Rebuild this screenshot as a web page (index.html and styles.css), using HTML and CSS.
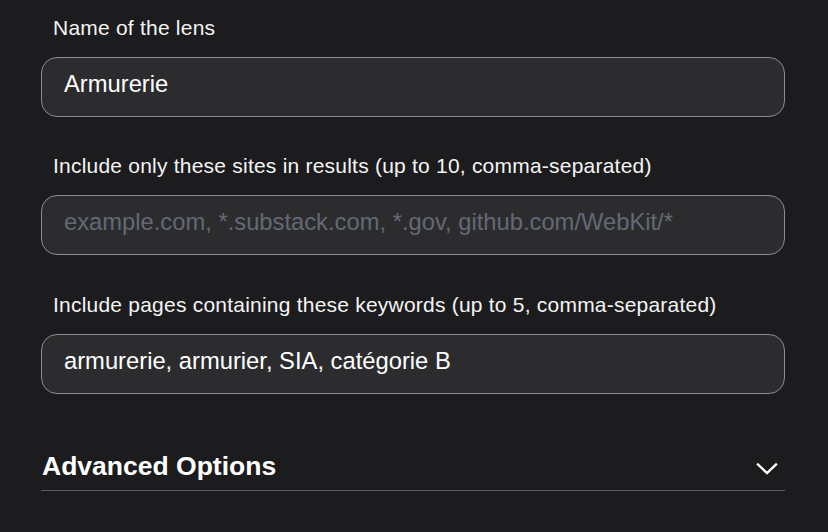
FILE: index.html
```html
<!DOCTYPE html>
<html lang="en">
<head>
<meta charset="utf-8">
<title>Lens</title>
<link rel="stylesheet" href="styles.css">
</head>
<body>
<div class="form">
  <div class="field">
    <label class="label" for="name">Name of the lens</label>
    <input class="input" id="name" type="text" value="Armurerie">
  </div>
  <div class="field">
    <label class="label" for="sites">Include only these sites in results (up to 10, comma-separated)</label>
    <input class="input" id="sites" type="text" placeholder="example.com, *.substack.com, *.gov, github.com/WebKit/*">
  </div>
  <div class="field field-keywords">
    <label class="label" for="kw">Include pages containing these keywords (up to 5, comma-separated)</label>
    <input class="input" id="kw" type="text" value="armurerie, armurier, SIA, catégorie B">
  </div>
  <div class="advanced">
    <h2 class="advanced-title">Advanced Options</h2>
    <svg class="chevron" width="22" height="14" viewBox="0 0 22 14" aria-hidden="true">
      <path d="M2 2.5 L11 11 L20 2.5" fill="none" stroke="#ffffff" stroke-width="2.4" stroke-linecap="square" stroke-linejoin="miter"/>
    </svg>
  </div>
</div>
</body>
</html>
```

FILE: styles.css
```css
html, body {
  margin: 0;
  padding: 0;
  background: #1c1c1e;
  font-family: "Liberation Sans", Arial, sans-serif;
  color: #f2f2f2;
}

.form {
  width: 744px;
  margin-left: 41px;
  padding-top: 15px;
  display: flex;
  flex-direction: column;
  gap: 36px;
}

.field {
  display: flex;
  flex-direction: column;
  gap: 17px;
}

.field-keywords {
  margin-top: 1px;
}

.label {
  font-size: 21px;
  line-height: 25px;
  letter-spacing: 0.22px;
  padding-left: 12px;
  color: #f4f4f4;
}

.input {
  box-sizing: border-box;
  height: 60px;
  width: 100%;
  margin: 0;
  padding: 0 22px 7px 22px;
  background: #2c2c2e;
  border: 1px solid #8c8c90;
  border-radius: 16px;
  color: #ffffff;
  font-family: "Liberation Sans", Arial, sans-serif;
  font-size: 23.75px;
  outline: none;
}

.input::placeholder {
  color: #636975;
  opacity: 1;
}

.advanced {
  margin-top: 20px;
  display: flex;
  align-items: center;
  justify-content: space-between;
  border-bottom: 1px solid #5a5a5e;
  padding-bottom: 8px;
}

.advanced-title {
  margin: 0;
  padding-left: 1px;
  font-size: 26.5px;
  line-height: 32px;
  font-weight: 700;
  color: #ffffff;
}

.chevron {
  display: block;
  margin-right: 7px;
  margin-top: 6px;
}
```
